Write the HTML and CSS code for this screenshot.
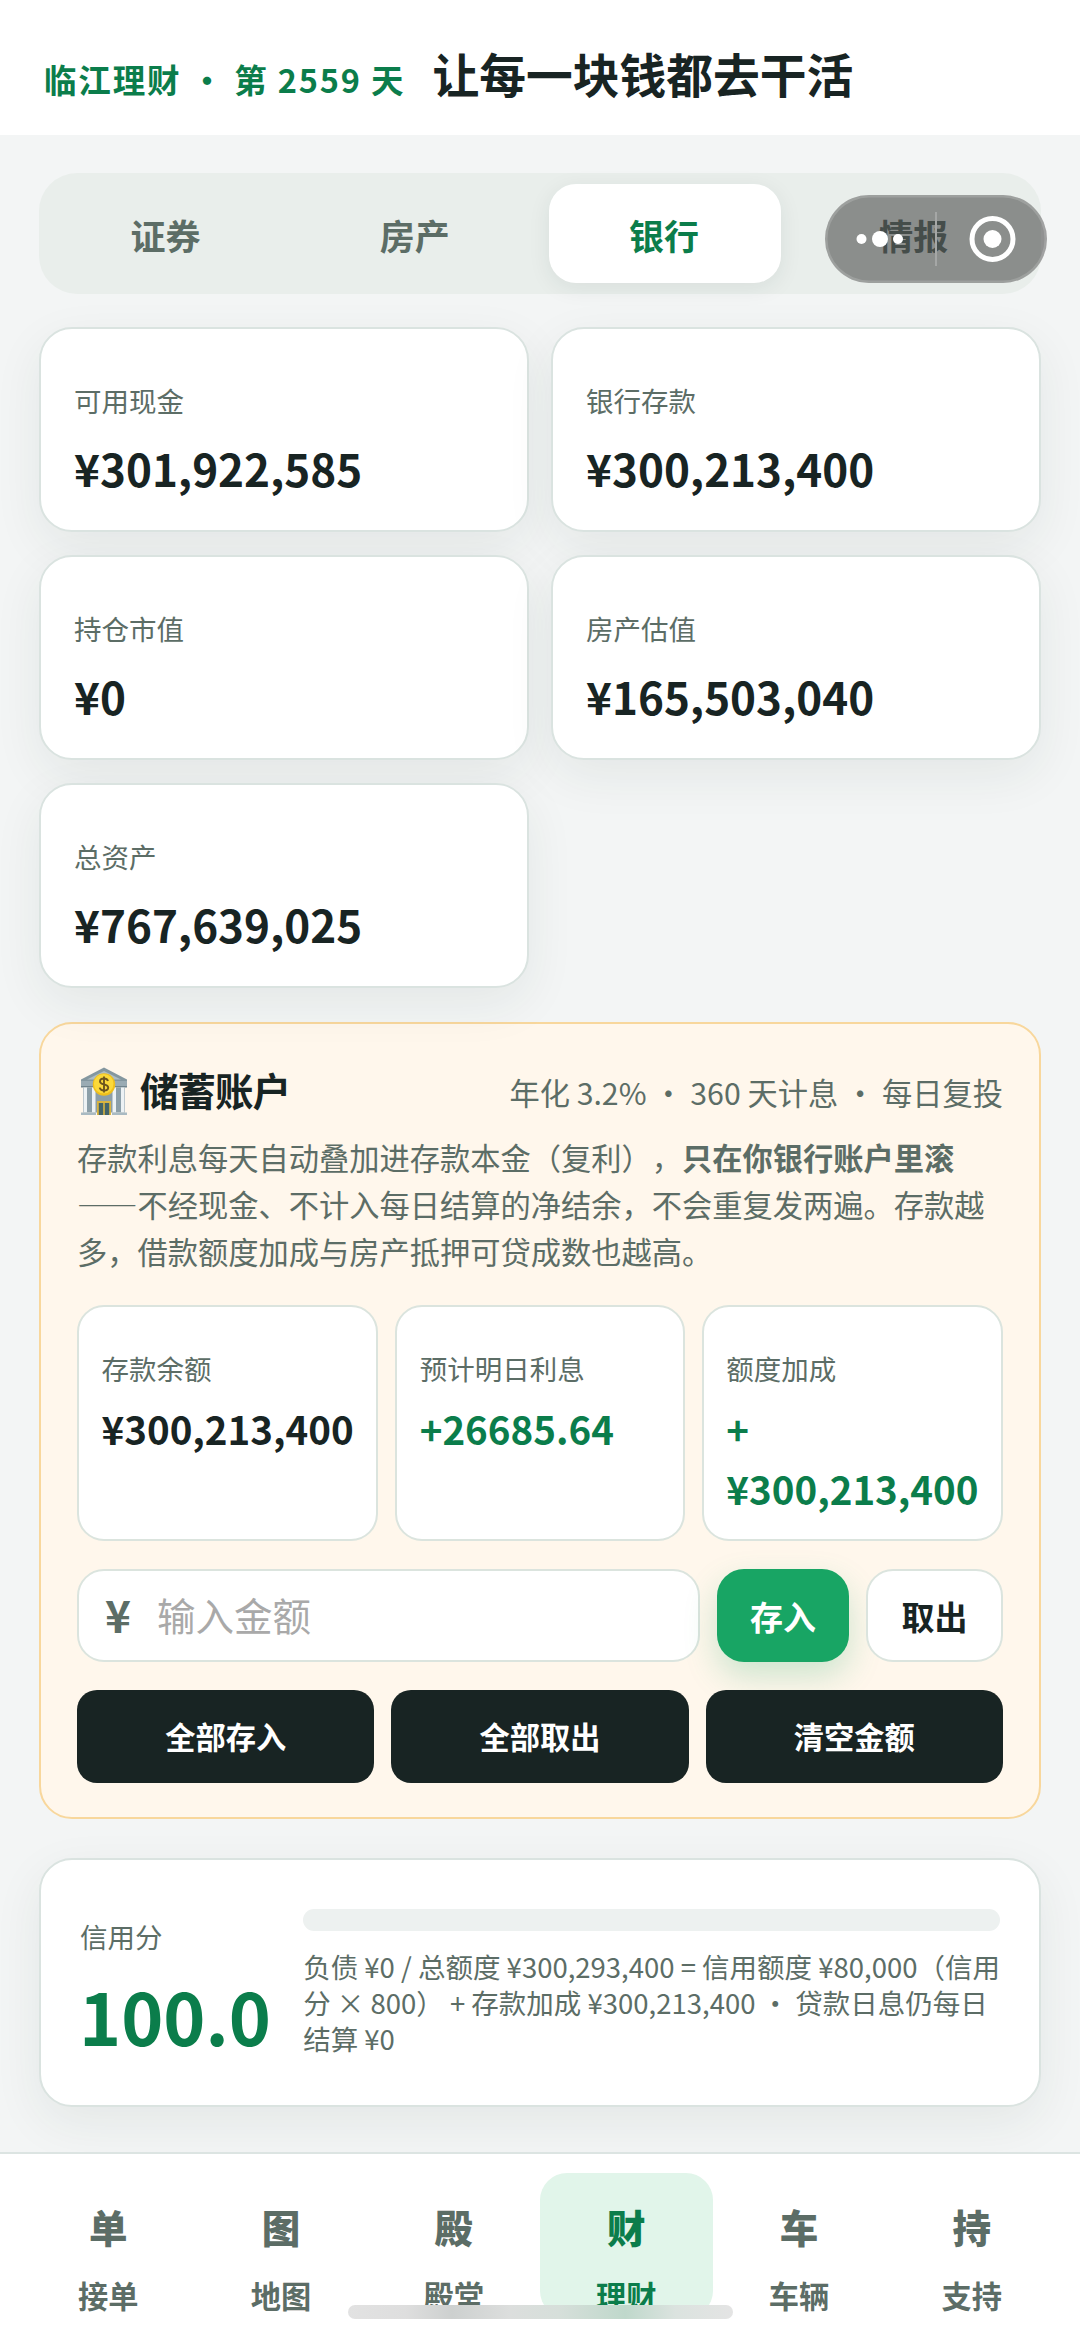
FILE: index.html
```html
<!DOCTYPE html>
<html lang="zh-CN">
<head>
<meta charset="utf-8">
<title>临江理财</title>
<link rel="stylesheet" href="styles.css">
</head>
<body>
<div class="app">
  <header class="header">
    <span class="eyebrow">临江理财 ・ 第 2559 天</span>
    <h1 class="headline">让每一块钱都去干活</h1>
  </header>
  <main class="content">
    <nav class="tabs">
      <div class="tab">证券</div>
      <div class="tab">房产</div>
      <div class="tab tab-active">银行</div>
      <div class="tab">情报</div>
    </nav>
    <section class="stats">
      <div class="stat"><div class="label">可用现金</div><div class="amount">¥301,922,585</div></div>
      <div class="stat"><div class="label">银行存款</div><div class="amount">¥300,213,400</div></div>
      <div class="stat"><div class="label">持仓市值</div><div class="amount">¥0</div></div>
      <div class="stat"><div class="label">房产估值</div><div class="amount">¥165,503,040</div></div>
      <div class="stat"><div class="label">总资产</div><div class="amount">¥767,639,025</div></div>
    </section>
    <section class="savings">
      <div class="savings-head">
        <svg class="bank" viewBox="0 0 48 50">
          <path d="M1 13.500 24 1.500l23 12v2H1z" fill="#84979f"/>
          <path d="M7 13.500 24 5l17 8.500z" fill="#aebdc4"/>
          <rect x="1" y="15" width="46" height="5.500" fill="#9aabb3"/>
          <path d="M1 20h46v1.500H1z" fill="#71848d"/>
          <rect x="3" y="21.500" width="42" height="25" fill="#8c9fa8"/>
          <path d="M3.500 21.500H7v25H3.500zM12 21.500h3.500v25H12zM32.500 21.500H36v25h-3.500zM41 21.500h3.500v25H41z" fill="#edf2f4"/>
          <path d="M1 46.500h15V49H1zM32 46.500h15V49H32z" fill="#a9bac2"/>
          <rect x="17" y="35" width="14" height="14" fill="#d9b440"/>
          <path d="M18.800 37h4.400v12h-4.400zM24.800 37h4.400v12h-4.400z" fill="#43646a"/>
          <circle cx="24" cy="18.500" r="11.200" fill="#efbf1c"/>
          <circle cx="23.700" cy="17.800" r="9.800" fill="#fbd93a"/>
          <path d="M28 15c-.6-1.800-2-2.500-4-2.500-2.400 0-4 1-4 2.900 0 3.900 8.200 2.100 8.200 6 0 1.900-1.700 3.100-4.200 3.100-2.300 0-3.900-1-4.300-2.900M24 10.500v16" fill="none" stroke="#6d551e" stroke-width="1.900"/>
        </svg>
        <h2 class="savings-title">储蓄账户</h2>
        <span class="savings-note">年化 3.2% ・ 360 天计息 ・ 每日复投</span>
      </div>
      <p class="savings-text">存款利息每天自动叠加进存款本金（复利），<strong>只在你银行账户里滚</strong><br>——不经现金、不计入每日结算的净结余，不会重复发两遍。存款越多，借款额度加成与房产抵押可贷成数也越高。</p>
      <div class="minis">
        <div class="mini"><div class="label">存款余额</div><div class="mini-value">¥300,213,400</div></div>
        <div class="mini"><div class="label">预计明日利息</div><div class="mini-value gain">+26685.64</div></div>
        <div class="mini"><div class="label">额度加成</div><div class="mini-value gain">+<br>¥300,213,400</div></div>
      </div>
      <div class="entry">
        <label class="field"><span class="yen">¥</span><input class="money" type="text" placeholder="输入金额"></label>
        <button class="btn btn-in">存入</button>
        <button class="btn btn-out">取出</button>
      </div>
      <div class="quick">
        <button class="dark">全部存入</button>
        <button class="dark">全部取出</button>
        <button class="dark">清空金额</button>
      </div>
    </section>
    <section class="credit">
      <div class="score"><div class="label">信用分</div><div class="score-value">100.0</div></div>
      <div class="credit-info">
        <div class="bar"></div>
        <p class="credit-text">负债 ¥0 / 总额度 ¥300,293,400 = 信用额度 ¥80,000（信用<br>分 × 800） + 存款加成 ¥300,213,400 ・ 贷款日息仍每日<br>结算 ¥0</p>
      </div>
    </section>
  </main>
  <nav class="bottom">
    <div class="item"><b class="glyph">单</b><span>接单</span></div>
    <div class="item"><b class="glyph">图</b><span>地图</span></div>
    <div class="item"><b class="glyph">殿</b><span>殿堂</span></div>
    <div class="item item-active"><b class="glyph">财</b><span>理财</span></div>
    <div class="item"><b class="glyph">车</b><span>车辆</span></div>
    <div class="item"><b class="glyph">持</b><span>支持</span></div>
  </nav>
  <div class="capsule">
    <svg viewBox="0 0 222 88" width="222" height="88">
      <g fill="#fff"><circle cx="36.500" cy="44" r="5"/><circle cx="55" cy="44" r="8"/><circle cx="73" cy="44" r="5"/><circle cx="167.500" cy="44" r="9"/></g>
      <path d="M111 17v54" stroke="#a5a7a6" stroke-width="2"/>
      <circle cx="167.500" cy="44" r="20.500" fill="none" stroke="#fff" stroke-width="5"/>
    </svg>
  </div>
  <div class="home-bar"></div>
</div>
</body>
</html>
```
FILE: styles.css
```css
* { box-sizing: border-box; }

body {
  margin: 0;
  font-family: "Noto Sans CJK SC", sans-serif;
  color: #182423;
  background: #f3f5f5;
  text-spacing-trim: space-all;
}

h1, h2, p { margin: 0; }

.app {
  position: relative;
  display: flex;
  flex-direction: column;
  height: 2341px;
  overflow: hidden;
}

.header {
  display: flex;
  align-items: baseline;
  gap: 27px;
  height: 135px;
  padding: 39px 44px 0;
  background: #fff;
}

.eyebrow {
  font-size: 32.5px;
  font-weight: 700;
  letter-spacing: 1.85px;
  color: #0b7d4b;
}

.headline {
  font-size: 46.75px;
  font-weight: 700;
  line-height: 68px;
}

.content {
  flex: 1;
  padding: 38px 39px 0;
}

.tabs {
  display: grid;
  grid-template-columns: repeat(4, 1fr);
  gap: 17px;
  height: 121px;
  padding: 11px;
  border-radius: 38px;
  background: #e9eeeb;
}

.tab {
  display: flex;
  align-items: center;
  justify-content: center;
  padding: 1px 1px 0 0;
  border-radius: 27px;
  font-size: 35px;
  font-weight: 700;
  color: #5c6d66;
}

.tab-active {
  color: #0b7d4b;
  background: #fff;
  box-shadow: 0 5px 22px rgba(23, 50, 45, .08);
}

.stats {
  display: grid;
  grid-template-columns: 1fr 1fr;
  grid-auto-rows: 205px;
  gap: 23px 22px;
  margin-top: 33px;
}

.stat, .credit {
  border: 2px solid #dae3e0;
  border-radius: 33px;
  background: #fff;
  box-shadow: 0 16px 50px rgba(23, 50, 45, .07);
}

.stat { padding: 51px 33px 0; }

.label {
  font-size: 27.5px;
  line-height: 40px;
  color: #5c6d66;
}

.amount {
  margin-top: 16px;
  font-size: 44px;
  font-weight: 700;
  line-height: 64px;
}

.savings {
  height: 797px;
  margin-top: 34px;
  padding: 33px 36px 0;
  border: 2px solid #f8d79c;
  border-radius: 33px;
  background: #fff7ec;
}

.savings-head {
  display: flex;
  align-items: center;
  height: 68px;
}

.bank {
  width: 48px;
  height: 50px;
  margin: 0 12px 0 3px;
}

.savings-title {
  margin-top: -4px;
  font-size: 38.5px;
  font-weight: 700;
  letter-spacing: -1px;
}

.savings-note {
  margin-left: auto;
  padding-top: 2px;
  font-size: 30.25px;
  color: #5c6d66;
}

.savings-text {
  margin-top: 9px;
  font-size: 30.25px;
  line-height: 46.75px;
  color: #5c6d66;
}

.minis {
  display: grid;
  grid-template-columns: 301fr 290fr 301fr;
  gap: 17px;
  height: 236px;
  margin-top: 31px;
}

.mini {
  padding: 41px 22.5px 0;
  border: 2px solid #dbe4de;
  border-radius: 27px;
  background: #fff;
}

.mini-value {
  margin-top: 10px;
  font-size: 38.5px;
  font-weight: 700;
  line-height: 60px;
  white-space: nowrap;
}

.gain { color: #0b7d4b; }

.entry {
  display: flex;
  gap: 17px;
  height: 93px;
  margin-top: 28px;
}

.field {
  display: flex;
  flex: 1;
  align-items: center;
  min-width: 0;
  padding: 0 26px 3px;
  border: 2px solid #dbe4de;
  border-radius: 27px;
  background: #fff;
}

.yen {
  margin-right: 26px;
  font-size: 44px;
  font-weight: 700;
  color: #5c6d66;
}

.money {
  flex: 1;
  min-width: 0;
  padding: 0;
  border: 0;
  background: none;
  font: 38.5px "Noto Sans CJK SC", sans-serif;
}

.money::placeholder { color: #a9a9a9; }

.btn, .dark {
  padding: 0;
  border: 0;
  border-radius: 27px;
  font-family: inherit;
  font-weight: 700;
}

.btn { font-size: 33px; }

.btn-in {
  width: 132px;
  color: #fff;
  background: #18a564;
  box-shadow: 0 14px 33px rgba(24, 165, 100, .22);
}

.btn-out {
  width: 137px;
  border: 2px solid #dbe4de;
  color: #182423;
  background: #fff;
}

.quick {
  display: grid;
  grid-template-columns: repeat(3, 1fr);
  gap: 17px;
  height: 93px;
  margin-top: 28px;
}

.dark {
  padding-bottom: 2px;
  border-radius: 20px;
  font-size: 30.25px;
  color: #fff;
  background: #182423;
}

.credit {
  display: flex;
  height: 249px;
  margin-top: 39px;
  padding: 0 39px;
}

.score {
  width: 225px;
  padding-top: 56px;
}

.score-value {
  margin: 7px 0 0 -1px;
  font-size: 71.5px;
  font-weight: 700;
  line-height: 104px;
  color: #0b7d4b;
}

.credit-info {
  flex: 1;
  padding-top: 49px;
}

.bar {
  height: 22px;
  border-radius: 11px;
  background: #edf1f0;
}

.credit-text {
  margin-top: 18px;
  font-size: 27.5px;
  line-height: 35.75px;
  color: #5c6d66;
  white-space: nowrap;
}

.bottom {
  position: relative;
  display: grid;
  grid-template-columns: repeat(6, 1fr);
  height: 189px;
  padding: 19px 22px 0;
  border-top: 2px solid #dce4e2;
  background: #fff;
}

.item {
  display: flex;
  flex-direction: column;
  align-items: center;
  height: 145px;
  padding-top: 25px;
  border-radius: 27px;
  font-size: 30.25px;
  font-weight: 700;
  line-height: 44px;
  color: #5c6d66;
}

.glyph {
  margin-bottom: 19px;
  font-size: 38.5px;
  line-height: 56px;
}

.item-active {
  color: #0b7d4b;
  background: #e1f5ea;
}

.capsule {
  position: absolute;
  top: 195px;
  left: 825px;
  width: 222px;
  height: 88px;
  border-radius: 44px;
  background: rgba(45, 45, 45, .5);
  box-shadow: inset 0 0 0 2.500px rgba(255, 255, 255, .16);
}

.capsule svg { display: block; }

.home-bar {
  position: absolute;
  top: 2305px;
  left: 348px;
  width: 385px;
  height: 14px;
  border-radius: 7px;
  background: linear-gradient(90deg, #e2e2e2 0%, #dedede 15%, #cdd0cf 27%, #dcdedd 42%, #d6dfda 55%, #bfd8cb 72%, #dbe3df 85%, #e4e4e4 100%);
}
```
